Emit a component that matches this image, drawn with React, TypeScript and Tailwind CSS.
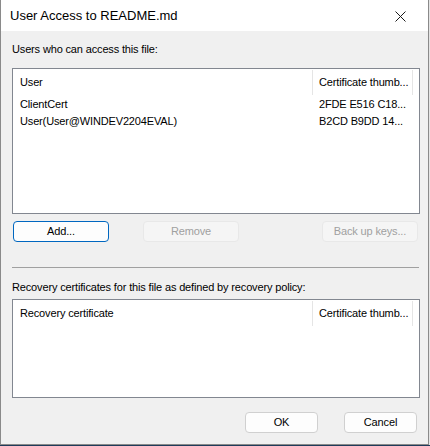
import React from "react";

const font = { fontFamily: '"Liberation Sans", Arial, sans-serif' };

function Btn({
  label,
  w,
  variant = "normal",
}: {
  label: string;
  w: string;
  variant?: "normal" | "default" | "disabled";
}) {
  const look =
    variant === "default"
      ? "border-[#0067c0] bg-[#fdfdfd] text-black"
      : variant === "disabled"
        ? "border-[#e8e8e8] bg-[#f5f5f5] text-[#a0a0a0]"
        : "border-[#d0d0d0] bg-[#fdfdfd] text-black";
  return (
    <div
      className={`${w} h-[21px] flex items-center justify-center rounded-[4px] border ${look}`}
    >
      {label}
    </div>
  );
}

function ListBox({
  first,
  rows,
  h,
}: {
  first: string;
  rows: [string, string][];
  h: string;
}) {
  return (
    <div className={`w-[408px] ${h} border border-[#828790] bg-white flex flex-col`}>
      <div className="h-[27px] flex items-stretch">
        <div className="w-[300px] flex items-center pl-[7px] border-r border-[#e5e5e5] my-[1px]">
          {first}
        </div>
        <div className="w-[100px] flex items-center pl-[6px] border-r border-[#e5e5e5] my-[1px] whitespace-nowrap">
          Certificate thumb...
        </div>
      </div>
      {rows.map(([a, b]) => (
        <div key={a} className="h-[17px] flex items-center">
          <div className="w-[300px] pl-[7px] whitespace-nowrap">{a}</div>
          <div className="pl-[6px] whitespace-nowrap">{b}</div>
        </div>
      ))}
    </div>
  );
}

export default function App() {
  return (
    <div
      className="w-[430px] h-[446px] bg-[#e4e4e4] flex flex-col text-[11px] tracking-[-0.15px]"
      style={font}
    >
      <div className="w-[429px] h-[445px] border-x border-b border-[#8a8a8a] flex flex-col text-black">
        <div className="h-[31px] bg-white flex items-center justify-between pl-[9px] pr-[22px] shrink-0">
          <span className="text-[13px] tracking-normal">User Access to README.md</span>
          <svg width="11" height="11" viewBox="0 0 11 11" className="mt-[1px]">
            <path d="M0.5 0.5 L10.5 10.5 M10.5 0.5 L0.5 10.5" stroke="#1a1a1a" strokeWidth="1" />
          </svg>
        </div>
        <div className="flex-1 bg-[#f0f0f0] pl-[11px] flex flex-col">
          <div className="mt-[10px] h-[16px] leading-[16px]">
            Users who can access this file:
          </div>
          <div className="mt-[11px]">
            <ListBox
              first="User"
              h="h-[146px]"
              rows={[
                ["ClientCert", "2FDE E516 C18..."],
                ["User(User@WINDEV2204EVAL)", "B2CD B9DD 14..."],
              ]}
            />
          </div>
          <div className="mt-[7px] flex pl-[1px]">
            <Btn label="Add..." w="w-[96px]" variant="default" />
            <div className="ml-[34px]">
              <Btn label="Remove" w="w-[96px]" variant="disabled" />
            </div>
            <div className="ml-[83px]">
              <Btn label="Back up keys..." w="w-[96px]" variant="disabled" />
            </div>
          </div>
          <div className="mt-[25px] w-[407px] h-[1px] bg-[#a0a0a0]" />
          <div className="mt-[11px] h-[16px] leading-[16px] whitespace-nowrap">
            Recovery certificates for this file as defined by recovery policy:
          </div>
          <div className="mt-[4px]">
            <ListBox first="Recovery certificate" h="h-[99px]" rows={[]} />
          </div>
          <div className="mt-[14px] flex justify-end pr-[11px] gap-[26px]">
            <Btn label="OK" w="w-[73px]" />
            <Btn label="Cancel" w="w-[73px]" />
          </div>
        </div>
      </div>
      <div className="h-[1px] w-[430px] bg-[#1f3b5a]" />
    </div>
  );
}
